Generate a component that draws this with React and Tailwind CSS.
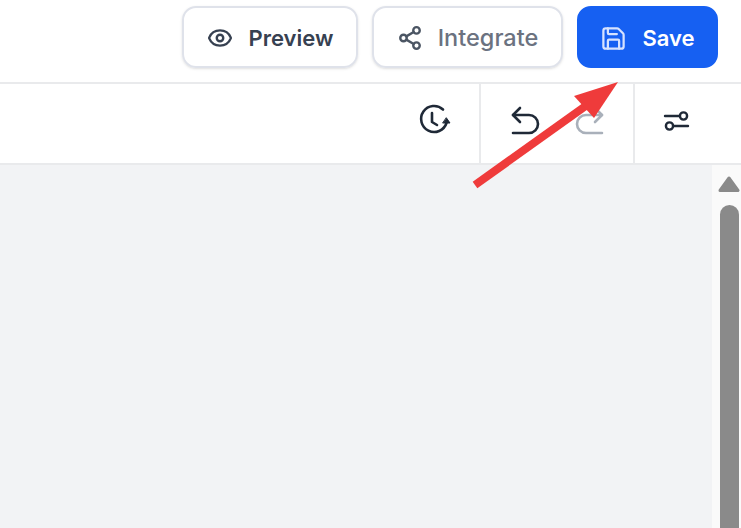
import { Eye, Share2, Save } from 'lucide-react';

function ToolbarButton({ className, children }) {
  return (
    <button className={`flex h-[62px] items-center justify-center rounded-[14px] border-2 pt-[2px] ${className}`}>
      {children}
    </button>
  );
}

function HistoryIcon() {
  return (
    <svg className="ml-[43px] mt-[19px]" width="34" height="34" viewBox="0 0 34 34" fill="none" stroke="#1f2937" strokeWidth="2.6" strokeLinecap="round" strokeLinejoin="round">
      <path d="M26 6.500A13 13 0 1 0 29.500 20" />
      <path d="M15 10v9l5 3" />
      <path d="M26 20h7l-3.500-5z" fill="#1f2937" strokeWidth="1" />
    </svg>
  );
}

function UndoIcon() {
  return (
    <svg width="30" height="30" viewBox="0 0 30 30" fill="none" stroke="#1f2937" strokeWidth="2.600" strokeLinecap="round" strokeLinejoin="round">
      <path d="M9 3 2 10l7 7" />
      <path d="M2 10h16a9 9 0 0 1 0 18H2" />
    </svg>
  );
}

function RedoIcon() {
  return (
    <svg width="30" height="30" viewBox="0 0 30 30" fill="none" stroke="#a9b0ba" strokeWidth="2.600" strokeLinecap="round" strokeLinejoin="round">
      <path d="M21 3l7 7-7 7" />
      <path d="M28 10H12a9 9 0 0 0 0 18h16" />
    </svg>
  );
}

function SlidersIcon() {
  return (
    <svg className="mt-[23px]" width="28" height="28" viewBox="0 0 28 28" fill="none" stroke="#1f2937" strokeWidth="2.400" strokeLinecap="round">
      <path d="M2 9h14" />
      <circle cx="20.500" cy="9" r="3.600" />
      <path d="M11 19h14" />
      <circle cx="6.500" cy="19" r="3.600" />
    </svg>
  );
}

export default function App() {
  return (
    <div className="relative flex h-[528px] w-[741px] flex-col overflow-hidden bg-white font-['Inter',sans-serif]">
      {/* Top bar */}
      <div className="flex h-[84px] shrink-0 items-start justify-end gap-[14px] border-b-2 border-[#e9eaec] pr-[23px] pt-[6px]">
        <ToolbarButton className="w-[176px] gap-[16px] border-[#dfe2ea] text-[22px] font-semibold text-[#374151] shadow-sm">
          <Eye size={26} strokeWidth={2.2} />
          Preview
        </ToolbarButton>
        <ToolbarButton className="w-[191px] gap-[15px] border-[#dfe2ea] text-[23.5px] font-medium text-[#6b7280] shadow-sm">
          <Share2 size={26} strokeWidth={2.2} className="text-[#4b5563]" />
          Integrate
        </ToolbarButton>
        <ToolbarButton className="w-[141px] gap-[15px] border-[#1660f2] bg-[#1660f2] text-[22px] font-semibold text-white">
          <Save size={27} strokeWidth={2} className="text-[#d6e2ff]" />
          Save
        </ToolbarButton>
      </div>

      {/* Editor toolbar */}
      <div className="flex h-[81px] shrink-0 items-stretch justify-end border-b-2 border-[#e9eaec]">
        <div className="w-[105px]">
          <HistoryIcon />
        </div>
        <div className="flex w-[154px] items-start gap-[33px] border-l-2 border-[#e9eaec] pl-[30px] pt-[21px]">
          <UndoIcon />
          <RedoIcon />
        </div>
        <div className="w-[108px] border-l-2 border-[#e9eaec] pl-[28px]">
          <SlidersIcon />
        </div>
      </div>

      {/* Canvas and scrollbar */}
      <div className="flex min-h-0 flex-1">
        <div className="flex-1 bg-[#f2f3f5]" />
        <div className="flex w-[29px] flex-col items-center bg-[#fafafa] pl-[5px] pt-[11px]">
          <svg width="22" height="16" viewBox="0 0 22 16" fill="#8a8a8a" stroke="#8a8a8a" strokeWidth="3" strokeLinejoin="round">
            <path d="M11 2 20 14.500H2z" />
          </svg>
          <div className="mt-[13px] w-[19px] flex-1 rounded-t-full bg-[#8a8a8a]" />
        </div>
      </div>

      {/* Red annotation arrow */}
      <svg className="absolute left-[465px] top-[78px]" width="160" height="115" viewBox="0 0 160 115" fill="none">
        <path d="M10 107 122 27" stroke="#ef3b3b" strokeWidth="8" />
        <path d="M153 4 109 18 129 40Z" fill="#ef3b3b" />
      </svg>
    </div>
  );
}
